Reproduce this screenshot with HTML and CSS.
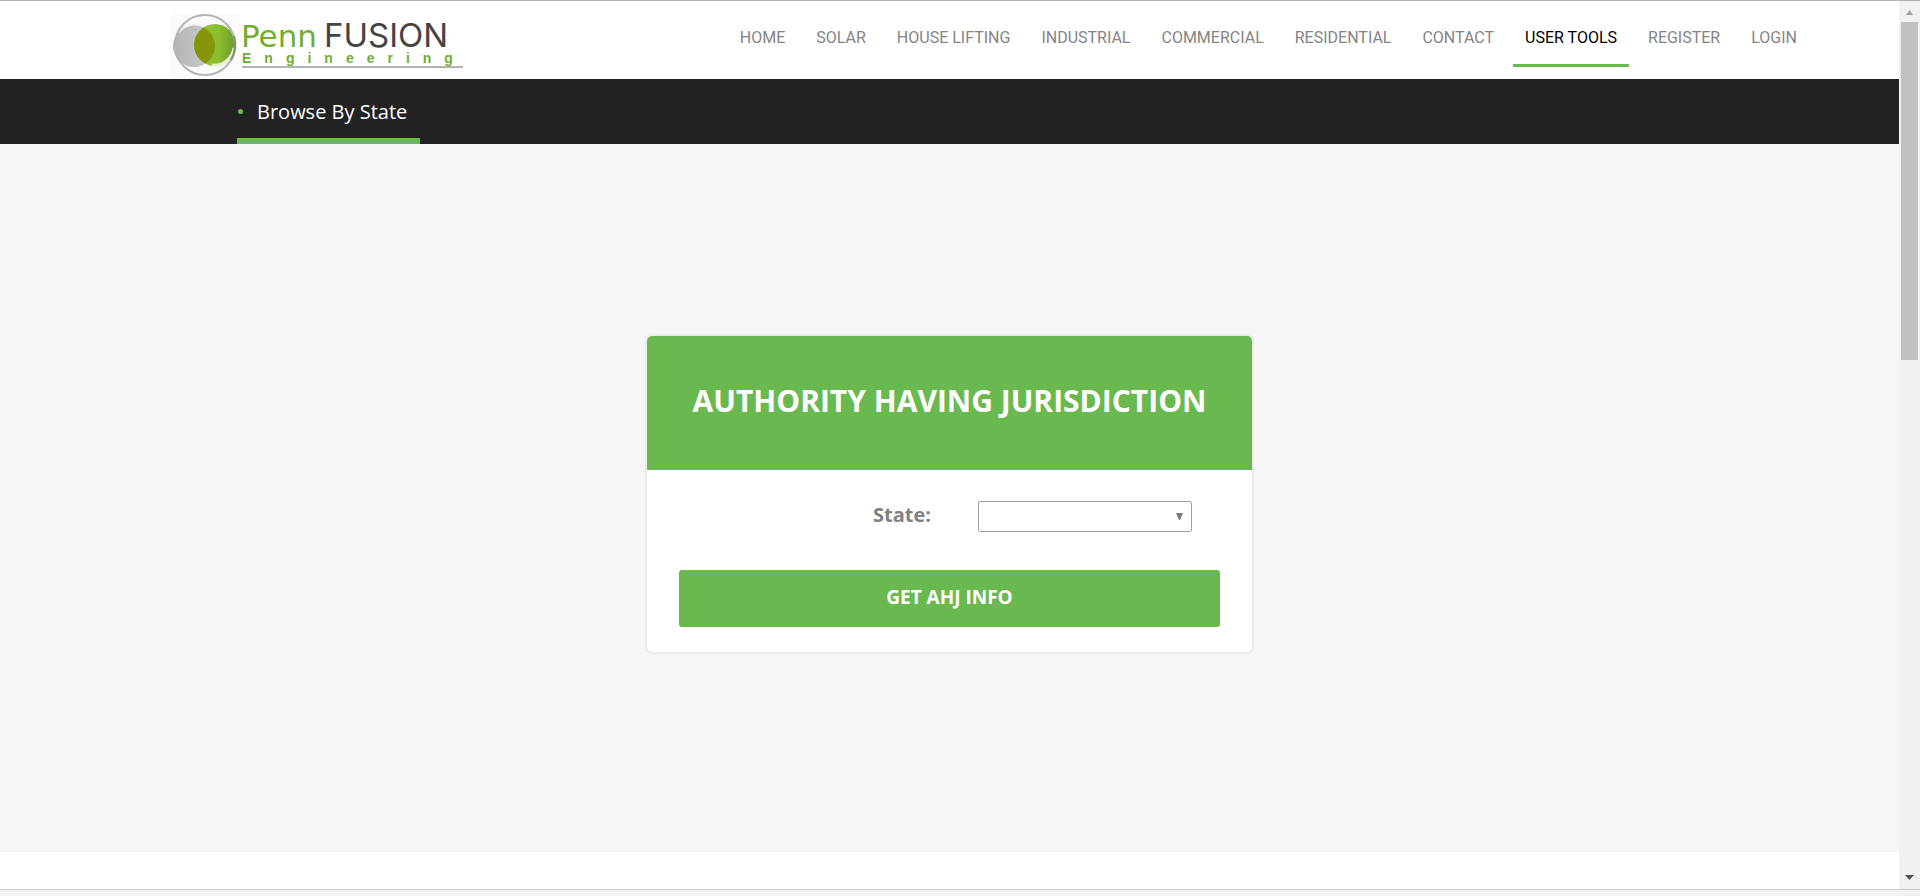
FILE: index.html
```html
<!DOCTYPE html>
<html lang="en">
<head>
    <meta charset="UTF-8">
    <meta name="viewport" content="width=device-width, initial-scale=1.0">
    <title>Penn Fusion Engineering</title>
    <link rel="stylesheet" href="styles.css">
</head>
<body>
    <div class="window">
        <div class="page">
            <header class="header">
                <a class="logo" href="#" aria-label="Penn Fusion Engineering">
                    <svg width="296" height="64" viewBox="0 0 296 64">
                        <defs>
                            <linearGradient id="gray" x1="0" x2="1">
                                <stop offset="0" stop-color="#b2b3b6"/>
                                <stop offset="1" stop-color="#cfd0d2"/>
                            </linearGradient>
                            <linearGradient id="green" x1="0" x2="1">
                                <stop offset="0" stop-color="#9cc63a"/>
                                <stop offset="0.6" stop-color="#8bbd2e"/>
                                <stop offset="1" stop-color="#6a9a2c"/>
                            </linearGradient>
                            <clipPath id="left-disc"><circle cx="24" cy="33" r="21"/></clipPath>
                        </defs>
                        <rect width="70" height="64" fill="#fbfbfb"/>
                        <circle cx="24" cy="33" r="21" fill="url(#gray)"/>
                        <circle cx="45" cy="32" r="21" fill="url(#green)"/>
                        <circle cx="45" cy="32" r="21" fill="#84960c" clip-path="url(#left-disc)"/>
                        <path d="M8 20a21 21 0 0 1 25-7" fill="none" stroke="#f2f2f2" stroke-width="2"/>
                        <path d="M42 52a20 20 0 0 0 22-17" fill="none" stroke="#e6f2cc" stroke-width="3"/>
                        <circle cx="35" cy="32" r="30" fill="none" stroke="#b4b4b6" stroke-width="2"/>
                        <path d="M64 23a30 30 0 0 1-3 24" fill="none" stroke="#808d72" stroke-width="2"/>
                        <text class="logo-penn" x="71" y="34">Penn</text>
                        <text class="logo-fusion" x="154" y="34">FUSION</text>
                        <text class="logo-sub" x="72" y="50">Engineering</text>
                        <path d="M72 54h221" stroke="#b3b3b3" stroke-width="2"/>
                    </svg>
                </a>
                <nav class="nav">
                    <a href="#">HOME</a>
                    <a href="#">SOLAR</a>
                    <a href="#">HOUSE LIFTING</a>
                    <a href="#">INDUSTRIAL</a>
                    <a href="#">COMMERCIAL</a>
                    <a href="#">RESIDENTIAL</a>
                    <a href="#">CONTACT</a>
                    <a class="active" href="#">USER TOOLS</a>
                    <a href="#">REGISTER</a>
                    <a href="#">LOGIN</a>
                </nav>
            </header>

            <nav class="subnav">
                <a href="#"><span class="dot"></span>Browse By State</a>
            </nav>

            <main class="main">
                <form class="card">
                    <h1>AUTHORITY HAVING JURISDICTION</h1>
                    <div class="card-body">
                        <div class="field">
                            <label for="state">State:</label>
                            <div class="select-wrap">
                                <select id="state">
                                    <option></option>
                                </select>
                                <svg class="caret" width="7" height="7" viewBox="0 0 7 7"><path d="M0 0h7L4 7H3z" fill="#7b7b7b"/></svg>
                            </div>
                        </div>
                        <button type="button">GET AHJ INFO</button>
                    </div>
                </form>
            </main>
            <footer class="footer"></footer>
        </div>

        <div class="scrollbar">
            <svg width="7" height="5" viewBox="0 0 7 5"><path d="M0 5L3.500 0 7 5z" fill="#a0a0a0"/></svg>
            <div class="track"><div class="thumb"></div></div>
            <svg width="9" height="5" viewBox="0 0 9 5"><path d="M0 0h9L4.500 5z" fill="#505050"/></svg>
        </div>
    </div>
    <div class="bottom-edge"></div>
</body>
</html>
```

FILE: styles.css
```css
* {
    box-sizing: border-box;
}
body {
    display: flex;
    flex-direction: column;
    min-height: 100vh;
    margin: 0;
    border-top: 1px solid #b0b0b0;
    background-color: #fff;
    color: #808080;
    font-family: "Open Sans", sans-serif;
}
a {
    text-decoration: none;
}
.window {
    display: flex;
    flex: 1;
}
.page {
    display: flex;
    flex: 1;
    flex-direction: column;
}

/* Header */
.header {
    display: flex;
    justify-content: space-between;
    height: 78px;
    padding: 12px 90px 0 170px;
}
.logo svg {
    display: block;
}
.logo-penn {
    fill: #70ad35;
    font: 31px "DejaVu Sans", sans-serif;
}
.logo-fusion {
    fill: #444;
    font: 33px Inter, sans-serif;
}
.logo-sub {
    fill: #70ad35;
    font: bold 14px "Liberation Sans", sans-serif;
    letter-spacing: 13px;
}
.nav {
    display: flex;
    align-items: flex-start;
    gap: 7px;
}
.nav a {
    height: 54px;
    padding: 12px 12px 0;
    border-bottom: 3px solid transparent;
    color: #848484;
    font: 16px/26px Roboto, sans-serif;
}
.nav .active {
    border-color: #6ab950;
    color: #000;
}

/* Dark bar */
.subnav {
    display: flex;
    height: 65px;
    padding-left: 237px;
    background-color: #222;
}
.subnav a {
    display: flex;
    align-items: center;
    gap: 14px;
    padding: 6px 13px 0 1px;
    border-bottom: 6px solid #6ab950;
    color: #fff;
    font-size: 20px;
}
.dot {
    width: 5px;
    height: 5px;
    border-radius: 50%;
    background-color: #6ab950;
}

/* Form card */
.main {
    display: flex;
    flex: 1;
    align-items: center;
    justify-content: center;
    padding-bottom: 8px;
    background-color: #f6f6f6;
}
.card {
    width: 605px;
    border-radius: 5px;
    background-color: #fff;
    box-shadow: 0 0 0 2px #ebebeb;
    overflow: hidden;
}
.card h1 {
    margin: 0;
    padding: 45px 0 49px;
    background-color: #6ab950;
    color: #fff;
    font: bold 30px/40px "Open Sans", sans-serif;
    text-align: center;
}
.card-body {
    padding: 31px 32px 25px;
}
.field {
    display: flex;
    align-items: flex-start;
    justify-content: flex-end;
    gap: 47px;
    margin-bottom: 38px;
    padding-right: 28px;
}
.field label {
    font-size: 20px;
    font-weight: bold;
    line-height: 28px;
}
.select-wrap {
    position: relative;
    width: 214px;
}
.select-wrap select {
    display: block;
    width: 100%;
    height: 31px;
    border: 1px solid #a0a0a0;
    border-radius: 2px;
    background-color: #fff;
    appearance: none;
}
.caret {
    position: absolute;
    top: 12px;
    right: 9px;
    pointer-events: none;
}
.card button {
    display: block;
    width: 100%;
    height: 57px;
    padding: 0 0 4px;
    border: none;
    border-radius: 3px;
    background-color: #6ab950;
    color: #fff;
    font: bold 19px "Open Sans", sans-serif;
    cursor: pointer;
}
.footer {
    height: 37px;
}

/* Scrollbar and window edge */
.scrollbar {
    display: flex;
    flex-direction: column;
    align-items: center;
    width: 21px;
    padding: 9px 2px;
    background-color: #f1f1f1;
}
.track {
    flex: 1;
    width: 17px;
    margin: 7px 0;
}
.thumb {
    height: 40%;
    background-color: #c1c1c1;
}
.bottom-edge {
    height: 7px;
    border-top: 1px solid #ccc;
    background-color: #f2f2f2;
}
```
